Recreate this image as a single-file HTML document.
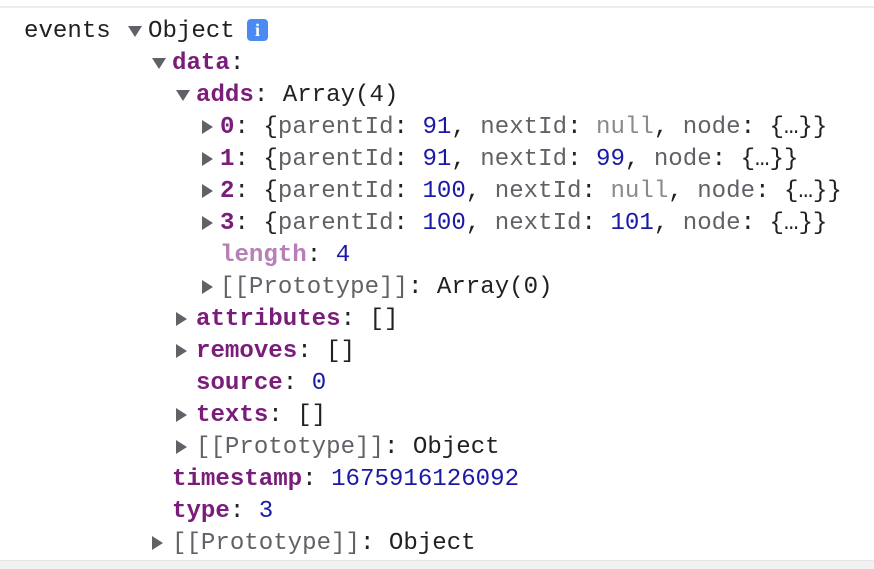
<!DOCTYPE html>
<html><head><style>
body{margin:0;width:874px;height:568px;background:#fff;position:relative;overflow:hidden;font-family:"Liberation Mono","DejaVu Sans Mono",monospace;font-size:24.1px;color:#202124}
.top{position:absolute;left:0;top:0;width:874px;height:6px;background:#fff;border-bottom:2px solid #ececec}
.bot{position:absolute;left:0;top:560px;width:874px;height:8px;background:#f1f1f1;border-top:1px solid #e6e6e6}
.l{position:absolute;height:32px;line-height:32px;white-space:pre;margin-top:2px}
.k{color:#7a1c7a;font-weight:bold}
.kl{color:#b67fb8;font-weight:bold}
.n{color:#1a1aa6}
.g{color:#5f6368}
.nu{color:#8a8a8a}
.t{position:absolute;width:0;height:0;margin-top:1px}
.down{border-left:7px solid transparent;border-right:7px solid transparent;border-top:11px solid #5f6368}
.right{border-top:7px solid transparent;border-bottom:7px solid transparent;border-left:11px solid #5f6368}
.info{position:absolute;left:247px;top:19px;width:21px;height:22px;background:#4a8af2;border-radius:4px;color:#fff;font:bold 18px "Liberation Serif",serif;text-align:center;line-height:22px}
</style></head><body>
<div class="top"></div>
<div class="l" style="left:24px;top:14px">events</div>
<div class="t down" style="left:128px;top:25px"></div>
<div class="l" style="left:148px;top:14px">Object</div>
<div class="info">i</div>

<div class="t down" style="left:152px;top:57px"></div>
<div class="l" style="left:172px;top:46px"><span class="k">data</span>:</div>

<div class="t down" style="left:176px;top:89px"></div>
<div class="l" style="left:196px;top:78px"><span class="k">adds</span>: Array(4)</div>

<div class="t right" style="left:202px;top:119px"></div>
<div class="l" style="left:220px;top:110px"><span class="k">0</span>: {<span class="g">parentId</span>: <span class="n">91</span>, <span class="g">nextId</span>: <span class="nu">null</span>, <span class="g">node</span>: {…}}</div>
<div class="t right" style="left:202px;top:151px"></div>
<div class="l" style="left:220px;top:142px"><span class="k">1</span>: {<span class="g">parentId</span>: <span class="n">91</span>, <span class="g">nextId</span>: <span class="n">99</span>, <span class="g">node</span>: {…}}</div>
<div class="t right" style="left:202px;top:183px"></div>
<div class="l" style="left:220px;top:174px"><span class="k">2</span>: {<span class="g">parentId</span>: <span class="n">100</span>, <span class="g">nextId</span>: <span class="nu">null</span>, <span class="g">node</span>: {…}}</div>
<div class="t right" style="left:202px;top:215px"></div>
<div class="l" style="left:220px;top:206px"><span class="k">3</span>: {<span class="g">parentId</span>: <span class="n">100</span>, <span class="g">nextId</span>: <span class="n">101</span>, <span class="g">node</span>: {…}}</div>
<div class="l" style="left:220px;top:238px"><span class="kl">length</span>: <span class="n">4</span></div>
<div class="t right" style="left:202px;top:279px"></div>
<div class="l" style="left:220px;top:270px"><span class="g">[[Prototype]]</span>: Array(0)</div>

<div class="t right" style="left:176px;top:311px"></div>
<div class="l" style="left:196px;top:302px"><span class="k">attributes</span>: []</div>
<div class="t right" style="left:176px;top:343px"></div>
<div class="l" style="left:196px;top:334px"><span class="k">removes</span>: []</div>
<div class="l" style="left:196px;top:366px"><span class="k">source</span>: <span class="n">0</span></div>
<div class="t right" style="left:176px;top:407px"></div>
<div class="l" style="left:196px;top:398px"><span class="k">texts</span>: []</div>
<div class="t right" style="left:176px;top:439px"></div>
<div class="l" style="left:196px;top:430px"><span class="g">[[Prototype]]</span>: Object</div>

<div class="l" style="left:172px;top:462px"><span class="k">timestamp</span>: <span class="n">1675916126092</span></div>
<div class="l" style="left:172px;top:494px"><span class="k">type</span>: <span class="n">3</span></div>
<div class="t right" style="left:152px;top:535px"></div>
<div class="l" style="left:172px;top:526px"><span class="g">[[Prototype]]</span>: Object</div>
<div class="bot"></div>
</body></html>
